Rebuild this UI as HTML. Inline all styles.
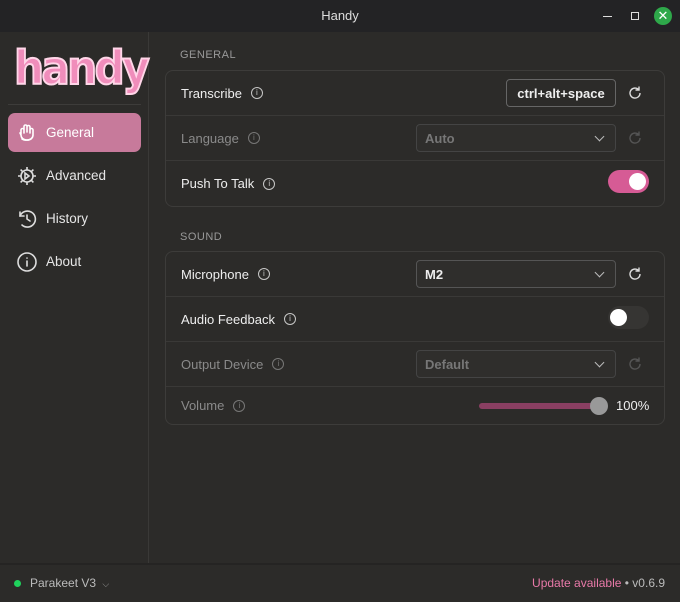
<!DOCTYPE html>
<html><head><meta charset="utf-8"><style>
*{box-sizing:border-box;margin:0;padding:0}
body{width:680px;height:602px;background:#2c2b29;font-family:"Liberation Sans","DejaVu Sans",sans-serif;color:#eee;position:relative;overflow:hidden;font-size:13px}
.tb{position:absolute;left:0;top:0;width:680px;height:32px;background:#232325;text-align:center;line-height:32px;color:#ddd;font-size:13px}
.side{position:absolute;left:0;top:32px;width:149px;height:531px;border-right:1px solid #3a3937}
.logo{position:absolute;left:14px;top:10px;font:bold 46px "DejaVu Sans",sans-serif;color:#f08dbb;letter-spacing:-3px;-webkit-text-stroke:2px #ffd6e8;line-height:52px;transform:scaleX(0.92);transform-origin:left}
.div{position:absolute;left:8px;top:72px;width:133px;height:1px;background:#3d3c3a}
.nav{position:absolute;left:8px;width:133px;height:39px;border-radius:7px;display:flex;align-items:center;padding-left:8px;font-size:13.5px;color:#e6e6e6}
.nav svg{margin-right:8px}
.nav.act{background:#c77a9b;color:#fff}
.lbl{position:absolute;left:180px;font-size:11px;color:#999;letter-spacing:.5px}
.card{position:absolute;left:165px;width:500px;border:1px solid #3d3c3a;border-radius:8px}
.row{position:relative;height:45px;border-bottom:1px solid #3a3937;display:flex;align-items:center;padding-left:15px;font-size:13px}
.row:last-child{border-bottom:none}
.row.dim{color:#8a8a8a}
.i{display:inline-block;width:12px;height:12px;border:1px solid currentColor;border-radius:50%;margin-left:9px;font-size:8px;line-height:10px;text-align:center;opacity:.8}
.sel{position:absolute;left:250px;top:8px;width:200px;height:28px;border:1px solid #555;border-radius:4px;background:#2f2e2c;font-weight:bold;padding-left:8px;line-height:27px}
.dim .sel{color:#777;border-color:#444}
.sel:after{content:"";position:absolute;right:12px;top:8px;width:6px;height:6px;border-right:1.3px solid #bbb;border-bottom:1.3px solid #bbb;transform:rotate(45deg)}
.ref{position:absolute;left:461px;top:14px}
.tg{position:absolute;left:442px;top:9px;width:41px;height:23px;border-radius:12px}
.tg b{position:absolute;top:3px;width:17px;height:17px;border-radius:50%;background:#fff}
.foot{position:absolute;left:0;top:563px;width:680px;height:39px;border-top:2px solid #252423;font-size:12px;color:#bbb}
</style></head><body>
<div class="tb">Handy
<span style="position:absolute;left:603px;top:16px;width:9px;height:1px;background:#ddd"></span>
<span style="position:absolute;left:631px;top:12px;width:8px;height:8px;border:1.3px solid #ddd"></span>
<span style="position:absolute;left:654px;top:7px;width:18px;height:18px;border-radius:50%;background:#2ea84a;color:#fff;line-height:18px;font-size:13px">✕</span>
</div>
<div class="side">
<div class="logo">handy</div>
<div class="div"></div>
<div class="nav act" style="top:81px"><svg width="22" height="22" viewBox="0 0 22 22" fill="none" stroke="#fff" stroke-width="1.6" stroke-linecap="round"><path d="M5 12V8a1.5 1.5 0 013 0v3M8 10V4.5a1.5 1.5 0 013 0V10M11 9.5V5a1.5 1.5 0 013 0v6M14 11V8a1.5 1.5 0 013 0v5c0 3-2.5 5-6 5s-6-2-6-5l-1-2"/><path d="M6 17c2 1.5 7 1.5 9 0"/></svg>General</div>
<div class="nav" style="top:124px"><svg width="22" height="22" viewBox="0 0 22 22" fill="none" stroke="#ddd" stroke-width="1.6"><circle cx="11" cy="11" r="6"/><path d="M11 2v3M11 17v3M2 11h3M17 11h3M4.6 4.6l2.1 2.1M15.3 15.3l2.1 2.1M4.6 17.4l2.1-2.1M15.3 6.7l2.1-2.1M9 8l4 3-4 3z"/></svg>Advanced</div>
<div class="nav" style="top:167px"><svg width="22" height="22" viewBox="0 0 22 22" fill="none" stroke="#ddd" stroke-width="1.6" stroke-linecap="round"><path d="M4 8a8 8 0 112 9"/><path d="M4 4v4h4M11 7v4l3 2"/></svg>History</div>
<div class="nav" style="top:210px"><svg width="22" height="22" viewBox="0 0 22 22" fill="none" stroke="#ddd" stroke-width="1.6" stroke-linecap="round"><circle cx="11" cy="11" r="9"/><path d="M11 10v5M11 7v.1"/></svg>About</div>
</div>
<div class="lbl" style="top:49px">GENERAL</div>
<div class="card" style="top:70px">
<div class="row">Transcribe<span class="i">i</span>
<div style="position:absolute;left:340px;top:8px;width:110px;height:28px;border:1px solid #666;border-radius:4px;font-weight:bold;text-align:center;line-height:27px;font-size:13px">ctrl+alt+space</div>
<svg class="ref" width="16" height="16" viewBox="0 0 16 16" fill="none" stroke="#ddd" stroke-width="1.4"><path d="M13 8a5 5 0 11-1.5-3.5M12 1.5v3.5H8.5"/></svg></div>
<div class="row dim">Language<span class="i">i</span><div class="sel">Auto</div>
<svg class="ref" width="16" height="16" viewBox="0 0 16 16" fill="none" stroke="#555" stroke-width="1.4"><path d="M13 8a5 5 0 11-1.5-3.5M12 1.5v3.5H8.5"/></svg></div>
<div class="row">Push To Talk<span class="i">i</span><div class="tg" style="background:#d65b95"><b style="left:21px"></b></div></div>
</div>
<div class="lbl" style="top:231px">SOUND</div>
<div class="card" style="top:251px">
<div class="row">Microphone<span class="i">i</span><div class="sel">M2</div>
<svg class="ref" width="16" height="16" viewBox="0 0 16 16" fill="none" stroke="#ddd" stroke-width="1.4"><path d="M13 8a5 5 0 11-1.5-3.5M12 1.5v3.5H8.5"/></svg></div>
<div class="row">Audio Feedback<span class="i">i</span><div class="tg" style="background:#363533"><b style="left:2px"></b></div></div>
<div class="row dim">Output Device<span class="i">i</span><div class="sel">Default</div>
<svg class="ref" width="16" height="16" viewBox="0 0 16 16" fill="none" stroke="#555" stroke-width="1.4"><path d="M13 8a5 5 0 11-1.5-3.5M12 1.5v3.5H8.5"/></svg></div>
<div class="row dim" style="height:37px">Volume<span class="i">i</span>
<div style="position:absolute;left:313px;top:16px;width:122px;height:6px;border-radius:3px;background:#8a3f62"></div>
<div style="position:absolute;left:424px;top:10px;width:18px;height:18px;border-radius:50%;background:#999"></div>
<span style="position:absolute;left:450px;top:11px;color:#eee">100%</span></div>
</div>
<div class="foot">
<span style="position:absolute;left:14px;top:15px;width:7px;height:7px;border-radius:50%;background:#1fd25c"></span>
<span style="position:absolute;left:30px;top:11px">Parakeet V3 <span style="font-size:9px;color:#999;margin-left:3px">⌵</span></span>
<span style="position:absolute;right:15px;top:11px"><span style="color:#e879a8">Update available</span> • v0.6.9</span>
</div>
</body></html>
